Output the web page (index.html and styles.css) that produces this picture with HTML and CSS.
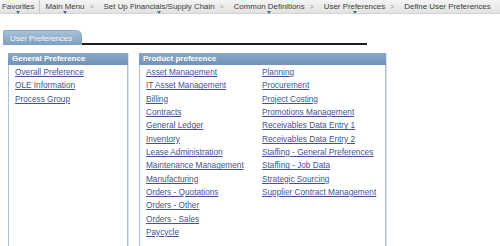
FILE: index.html
```html
<!DOCTYPE html>
<html>
<head>
<meta charset="utf-8">
<link rel="stylesheet" href="styles.css">
</head>
<body>
<nav class="crumbs">
  <span class="crumb menu first">Favorites</span>
  <span class="divider"></span>
  <span class="crumb menu">Main Menu</span>
  <span class="sep">&gt;</span>
  <span class="crumb menu">Set Up Financials/Supply Chain</span>
  <span class="sep">&gt;</span>
  <span class="crumb menu">Common Definitions</span>
  <span class="sep">&gt;</span>
  <span class="crumb menu">User Preferences</span>
  <span class="sep">&gt;</span>
  <span class="crumb">Define User Preferences</span>
</nav>
<div class="tabbar">
  <div class="tab">User Preferences</div>
  <div class="tabline"></div>
</div>
<div class="groups">
  <section class="box general">
    <h2 class="box-head">General Preference</h2>
    <div class="box-body">
      <div class="col">
        <a href="#">Overall Preference</a>
        <a href="#">OLE Information</a>
        <a href="#">Process Group</a>
      </div>
    </div>
  </section>
  <section class="box product">
    <h2 class="box-head">Product preference</h2>
    <div class="box-body">
      <div class="col col-a">
        <a href="#">Asset Management</a>
        <a href="#">IT Asset Management</a>
        <a href="#">Billing</a>
        <a href="#">Contracts</a>
        <a href="#">General Ledger</a>
        <a href="#">Inventory</a>
        <a href="#">Lease Administration</a>
        <a href="#">Maintenance Management</a>
        <a href="#">Manufacturing</a>
        <a href="#">Orders - Quotations</a>
        <a href="#">Orders - Other</a>
        <a href="#">Orders - Sales</a>
        <a href="#">Paycycle</a>
      </div>
      <div class="col">
        <a href="#">Planning</a>
        <a href="#">Procurement</a>
        <a href="#">Project Costing</a>
        <a href="#">Promotions Management</a>
        <a href="#">Receivables Data Entry 1</a>
        <a href="#">Receivables Data Entry 2</a>
        <a href="#">Staffing - General Preferences</a>
        <a href="#">Staffing - Job Data</a>
        <a href="#">Strategic Sourcing</a>
        <a href="#">Supplier Contract Management</a>
      </div>
    </div>
  </section>
</div>
</body>
</html>
```
FILE: styles.css
```css
html, body {
  margin: 0;
  padding: 0;
  background: #ffffff;
  overflow: hidden;
}
body {
  width: 500px;
  height: 246px;
  font-family: "Liberation Sans", Arial, sans-serif;
}
.crumbs {
  display: flex;
  align-items: center;
  height: 14px;
  background: linear-gradient(#f4f4f4, #e2e2e2);
  border-bottom: 1px solid #d4d4d4;
  box-sizing: border-box;
  font-size: 7.9px;
  color: #3c3c3c;
  white-space: nowrap;
  padding-left: 2px;
}
.crumb {
  position: relative;
  line-height: 13px;
}
.crumb.menu::after {
  content: "";
  position: absolute;
  left: 50%;
  bottom: -1px;
  margin-left: -2px;
  border-left: 2.5px solid transparent;
  border-right: 2.5px solid transparent;
  border-top: 3px solid #3b6cb4;
}
.divider {
  width: 1px;
  height: 14px;
  background: #c8c8c8;
  margin: 0 5px 0 5px;
}
.sep {
  color: #9a9a9a;
  margin: 0 10px 0 5px;
  font-size: 7px;
}
.tabbar {
  display: flex;
  align-items: flex-end;
  margin-top: 16px;
  padding-left: 3px;
}
.tab {
  width: 79px;
  height: 15px;
  box-sizing: border-box;
  padding-left: 6px;
  padding-top: 1px;
  line-height: 14px;
  font-size: 8px;
  color: #f4f8fc;
  background: linear-gradient(#a9c1d8, #7f9fc0);
  border: 1px solid #88a6c4;
  border-bottom: none;
  border-radius: 2px 6px 0 0;
}
.tabline {
  width: 285px;
  height: 2px;
  background: #1e1e1e;
}
.groups {
  display: flex;
  align-items: stretch;
  gap: 11px;
  margin-top: 8px;
  padding-left: 8px;
  height: 200px;
}
.box {
  box-sizing: border-box;
  border: 1px solid #a9c2da;
  border-top: none;
  box-shadow: 1px 0 0 #d6e2ee;
  background: #ffffff;
}
.general { width: 120px; }
.product { width: 247px; }
.box-head {
  margin: 0 -1px;
  height: 12px;
  line-height: 12px;
  padding-left: 4px;
  font-size: 8px;
  font-weight: bold;
  color: #ffffff;
  background: linear-gradient(#87a8c8, #7093b8);
}
.box-body {
  display: flex;
  padding: 1px 0 0 6px;
}
.col {
  display: flex;
  flex-direction: column;
}
.col-a { width: 116px; }
.col a {
  font-size: 8.25px;
  line-height: 13.33px;
  color: #44538e;
  text-decoration: underline;
  white-space: nowrap;
}
```
